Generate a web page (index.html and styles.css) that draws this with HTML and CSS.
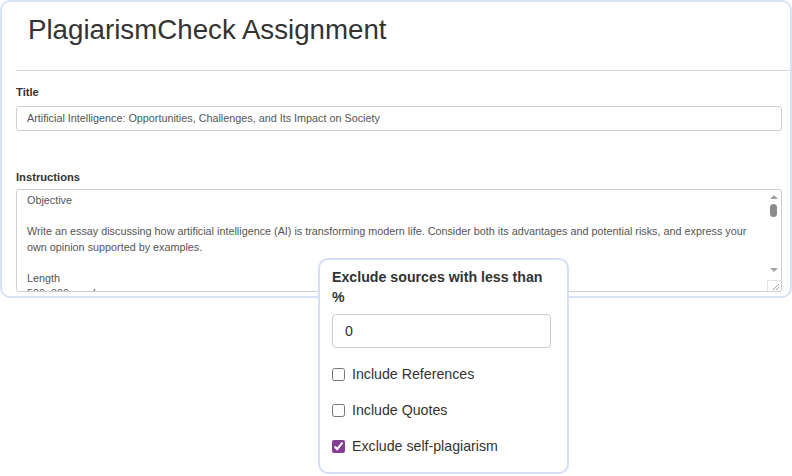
FILE: index.html
```html
<!DOCTYPE html>
<html lang="en">
<head>
  <meta charset="UTF-8" />
  <title>PlagiarismCheck Assignment</title>
  <link rel="stylesheet" href="styles.css">
</head>
<body>
  <div class="card">
    <h1>PlagiarismCheck Assignment</h1>
    <hr>

    <div class="form">
      <!-- TITLE -->
      <label class="field-label">Title</label>
      <div class="text-input">Artificial Intelligence: Opportunities, Challenges, and Its Impact on Society</div>

      <!-- INSTRUCTIONS -->
      <label class="field-label instructions-label">Instructions</label>
      <div class="textarea">
        <div class="textarea-text">
          <p>Objective</p>
          <p>&nbsp;</p>
          <p>Write an essay discussing how artificial intelligence (AI) is transforming modern life. Consider both its advantages and potential risks, and express your own opinion supported by examples.</p>
          <p>&nbsp;</p>
          <p>Length</p>
          <p>500–800 words</p>
        </div>
        <div class="scrollbar">
          <span class="arrow up"></span>
          <span class="thumb"></span>
          <span class="track"></span>
          <span class="arrow down"></span>
          <span class="grip">
            <svg width="11" height="9" viewBox="0 0 11 9"><path d="M9 2 L3 8 M9 5 L6 8" stroke="#9a9a9a" stroke-width="1" fill="none"/></svg>
          </span>
        </div>
      </div>
    </div>
  </div>

  <!-- SETTINGS POPUP -->
  <div class="popup">
    <div class="popup-title">Exclude sources with less than %</div>
    <input class="popup-input" type="text" value="0">
    <label class="check"><input type="checkbox"> Include References</label>
    <label class="check"><input type="checkbox"> Include Quotes</label>
    <label class="check"><input type="checkbox" checked> Exclude self-plagiarism</label>
  </div>
</body>
</html>
```

FILE: styles.css
```css
body {
  margin: 0;
  font-family: 'Liberation Sans', Arial, sans-serif;
  color: #333;
  background-color: #fff;
}

.card {
  border: 2px solid #d9e1f8;
  border-radius: 10px;
  box-sizing: border-box;
  height: 298px;
  overflow: hidden;
}

h1 {
  font-size: 27.7px;
  font-weight: normal;
  color: #333;
  margin: 0;
  padding: 12px 0 0 26px;
  height: 56px;
  line-height: 32px;
}

hr {
  border: 0;
  border-top: 1px solid #d8d8d8;
  margin: 0 0 0 14px;
}

.form {
  padding: 0 8px 0 14px;
}

.field-label {
  display: block;
  font-size: 11.2px;
  font-weight: bold;
  color: #333;
  line-height: 14px;
  margin-top: 14px;
}

.instructions-label {
  margin-top: 39px;
}

.text-input {
  margin-top: 7px;
  height: 25px;
  box-sizing: border-box;
  border: 1px solid #cfcfcf;
  border-radius: 3px;
  padding: 0 10px;
  font-size: 10.8px;
  line-height: 23px;
  color: #555;
}

.textarea {
  margin-top: 5px;
  height: 103px;
  box-sizing: border-box;
  border: 1px solid #cfcfcf;
  border-radius: 3px;
  display: flex;
  overflow: hidden;
}

.textarea-text {
  flex: 1;
  padding: 3px 8px 0 10px;
  font-size: 10.8px;
  line-height: 15.5px;
  color: #555;
}

.textarea-text p {
  margin: 0;
}

.scrollbar {
  width: 15px;
  display: flex;
  flex-direction: column;
  align-items: center;
}

.arrow {
  width: 0;
  height: 0;
  border-left: 4px solid transparent;
  border-right: 4px solid transparent;
  margin: 5px 0;
}

.arrow.up {
  border-bottom: 4px solid #a3a3a3;
}

.arrow.down {
  border-top: 4px solid #a3a3a3;
  margin-bottom: 8px;
}

.thumb {
  width: 7px;
  height: 13px;
  border-radius: 4px;
  background-color: #8a8a8a;
}

.track {
  flex: 1;
}

.grip {
  width: 13px;
  height: 10px;
  border-top: 1px solid #e4e4e4;
  border-left: 1px solid #e4e4e4;
  display: flex;
  align-items: flex-end;
  justify-content: flex-end;
}

.popup {
  position: absolute;
  left: 318px;
  top: 258px;
  width: 251px;
  height: 216px;
  box-sizing: border-box;
  background-color: #fff;
  border: 2px solid #d6ddf7;
  border-radius: 10px;
  padding: 7px 16px 0 12px;
  font-family: 'Liberation Sans', Arial, sans-serif;
  font-size: 14.2px;
  color: #333;
}

.popup-title {
  font-weight: bold;
  line-height: 20px;
}

.popup-input {
  display: block;
  width: 100%;
  height: 34px;
  box-sizing: border-box;
  margin-top: 7px;
  border: 1px solid #ccc;
  border-radius: 4px;
  padding: 0 12px;
  font-family: inherit;
  font-size: 14.2px;
  color: #333;
  outline: none;
}

.check {
  display: flex;
  align-items: center;
  gap: 7px;
  height: 36px;
  line-height: 20px;
}

.popup-input + .check {
  margin-top: 8px;
}

.check input {
  margin: 0;
  width: 13px;
  height: 13px;
  accent-color: #833e94;
}
```
